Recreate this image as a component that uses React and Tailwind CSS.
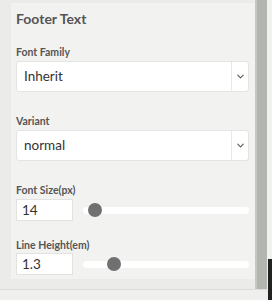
import { ChevronDown } from 'lucide-react';

function Label({ children, className = '' }) {
    return <div className={`h-[10px] text-[10.5px] font-bold text-[#555] leading-[10px] ${className}`}>{children}</div>;
}

function SelectBox({ value }) {
    return (
        <div className="flex h-[31px] w-[233px] rounded-[3px] border border-[#e4e5e2] bg-white">
            <div className="flex flex-1 items-center pl-[7px] text-[13.5px] text-[#333]">{value}</div>
            <div className="flex w-[17px] items-center justify-center border-l border-[#e8e8e6]">
                <ChevronDown size={11} strokeWidth={2.25} className="text-[#555]" />
            </div>
        </div>
    );
}

function SliderRow({ value, thumb }) {
    return (
        <div className="flex h-[22px] items-center">
            <div className="flex h-[22px] w-[57px] items-center border border-[#e2e3e0] bg-white pl-[5px] text-[13.5px] text-[#333]">
                {value}
            </div>
            <div className="relative ml-[10px] h-[7px] w-[166px] rounded-full bg-white">
                <div
                    className="absolute top-1/2 h-[14px] w-[14px] -translate-x-1/2 -translate-y-1/2 rounded-full bg-[#707070]"
                    style={{ left: thumb }}
                />
            </div>
        </div>
    );
}

export default function App() {
    return (
        <div className="flex h-[300px] w-[272px] bg-[#ebebe9]" style={{ fontFamily: 'Lato, sans-serif' }}>
            <div className="flex w-[267px] flex-col">
                <div className="flex h-[289px]">
                    <div className="w-[255px] pl-[11px] pt-[3px]">
                        <div className="h-[276px] w-[244px] bg-[#f2f3f1] pl-[5px] pt-[9px]">
                            <div className="h-[13px] text-[14px] font-bold leading-[13px] text-[#555]">Footer Text</div>
                            <Label className="mt-[22px]">Font Family</Label>
                            <div className="mt-[4px]">
                                <SelectBox value="Inherit" />
                            </div>
                            <Label className="mt-[24px]">Variant</Label>
                            <div className="mt-[4px]">
                                <SelectBox value="normal" />
                            </div>
                            <Label className="mt-[24px]">Font Size(px)</Label>
                            <div className="mt-[4px]">
                                <SliderRow value="14" thumb={12} />
                            </div>
                            <Label className="mt-[19px]">Line Height(em)</Label>
                            <div className="mt-[3px]">
                                <SliderRow value="1.3" thumb={31} />
                            </div>
                        </div>
                    </div>
                    <div className="w-[12px] border-l-2 border-[#c6c8c4] bg-[#b3b5b1]" />
                </div>
                <div className="h-[11px] border-t border-[#dcdcda] bg-[#efefed]" />
            </div>
            <div className="flex w-[5px] flex-col">
                <div className="h-[259px] bg-[#f1f1ef]" />
                <div className="ml-[1px] flex-1 bg-[#222]" />
            </div>
        </div>
    );
}
